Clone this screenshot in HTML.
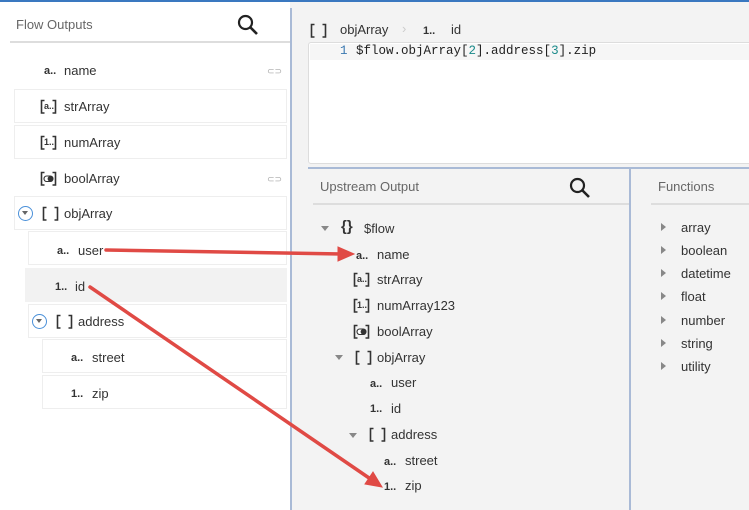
<!DOCTYPE html>
<html><head><meta charset="utf-8"><style>
*{box-sizing:border-box;margin:0;padding:0}
body{width:749px;height:510px;overflow:hidden;background:#fff;font-family:"Liberation Sans",sans-serif;color:#333;position:relative;font-size:13px}
.a{position:absolute}
.row{position:absolute;border:1px solid #eee;background:#fff;height:34px}
.t{position:absolute;font-size:13px;color:#333}
.ic{position:absolute;font-size:11px;font-weight:bold;color:#333}
.bx{position:absolute;width:17px;height:17px}
.bx svg{position:absolute;left:0;top:0}
.bx span{position:absolute;left:4px;top:3px;font-size:9px;font-weight:bold;color:#333}
.tri{position:absolute;width:0;height:0;border-left:4px solid transparent;border-right:4px solid transparent;border-top:5px solid #888}
.rt{position:absolute;width:0;height:0;border-top:4px solid transparent;border-bottom:4px solid transparent;border-left:5px solid #888}
.circ{position:absolute;width:15px;height:15px;border:1.5px solid #4a90d9;border-radius:50%}
.circ:after{content:"";position:absolute;left:3px;top:4px;border-left:3.5px solid transparent;border-right:3.5px solid transparent;border-top:4px solid #666}
.mono{font-family:"Liberation Mono",monospace;font-size:12.5px}
</style></head><body>
<svg width="0" height="0" style="position:absolute"><defs>
<symbol id="br" viewBox="0 0 17 17"><path d="M4.5 2.5H1.5V15H4.5M12.5 2.5H15.5V15H12.5" fill="none" stroke="#333" stroke-width="1.6"/></symbol>
<symbol id="tg" viewBox="0 0 17 17"><path d="M4.5 2.5H1.5V15H4.5M12.5 2.5H15.5V15H12.5" fill="none" stroke="#333" stroke-width="1.6"/><rect x="4" y="6" width="9" height="5.5" rx="2.7" fill="#fff" stroke="#333" stroke-width="1.1"/><circle cx="10.2" cy="8.75" r="2.6" fill="#333"/></symbol>
</defs></svg>
<div class="a" style="left:0;top:0;width:749px;height:2px;background:#3a78c0"></div>
<div class="t" style="left:16px;top:17px;color:#666">Flow Outputs</div>
<svg class="a" style="left:237px;top:14px" width="22" height="22" viewBox="0 0 22 22"><circle cx="8.5" cy="8.5" r="6.5" fill="none" stroke="#222" stroke-width="2.2"/><path d="M13 13L20 20" stroke="#222" stroke-width="2.6"/></svg>
<div class="a" style="left:10px;top:41px;width:280px;height:2px;background:#ddd"></div>
<div class="ic" style="left:44px;top:65px">a..</div><div class="t" style="left:64px;top:63px">name</div>
<div class="a" style="left:267px;top:66px;color:#aaa;font-size:9px">⊂⊃</div>
<div class="row" style="left:14px;top:89px;width:273px"></div>
<div class="bx" style="left:40px;top:98px"><svg width="17" height="17"><use href="#br"/></svg><span>a..</span></div><div class="t" style="left:64px;top:99px">strArray</div>
<div class="row" style="left:14px;top:125px;width:273px"></div>
<div class="bx" style="left:40px;top:134px"><svg width="17" height="17"><use href="#br"/></svg><span>1..</span></div><div class="t" style="left:64px;top:135px">numArray</div>
<div class="bx" style="left:40px;top:170px"><svg width="17" height="17"><use href="#tg"/></svg></div><div class="t" style="left:64px;top:171px">boolArray</div>
<div class="a" style="left:267px;top:174px;color:#aaa;font-size:9px">⊂⊃</div>
<div class="row" style="left:14px;top:196px;width:273px"></div>
<div class="circ" style="left:18px;top:206px"></div>
<div class="bx" style="left:42px;top:205px"><svg width="17" height="17"><use href="#br"/></svg></div><div class="t" style="left:64px;top:206px">objArray</div>
<div class="row" style="left:28px;top:231px;width:259px"></div>
<div class="ic" style="left:57px;top:245px">a..</div><div class="t" style="left:78px;top:243px">user</div>
<div class="a" style="left:25px;top:268px;width:262px;height:34px;background:#f2f2f2"></div>
<div class="ic" style="left:55px;top:281px">1..</div><div class="t" style="left:75px;top:279px">id</div>
<div class="row" style="left:28px;top:304px;width:259px"></div>
<div class="circ" style="left:32px;top:314px"></div>
<div class="bx" style="left:56px;top:313px"><svg width="17" height="17"><use href="#br"/></svg></div><div class="t" style="left:78px;top:314px">address</div>
<div class="row" style="left:42px;top:339px;width:245px"></div>
<div class="ic" style="left:71px;top:352px">a..</div><div class="t" style="left:92px;top:350px">street</div>
<div class="row" style="left:42px;top:375px;width:245px"></div>
<div class="ic" style="left:71px;top:388px">1..</div><div class="t" style="left:92px;top:386px">zip</div>
<div class="a" style="left:290px;top:2px;width:459px;height:508px;background:#f3f3f3"></div>
<div class="a" style="left:290px;top:8px;width:2px;height:502px;background:#a9bad6"></div>
<div class="bx" style="left:310px;top:22px"><svg width="17" height="17"><use href="#br"/></svg></div>
<div class="t" style="left:340px;top:22px">objArray</div>
<div class="t" style="left:402px;top:21px;color:#ccc">›</div>
<div class="ic" style="left:423px;top:25px">1..</div><div class="t" style="left:451px;top:22px">id</div>
<div class="a" style="left:308px;top:42px;width:445px;height:122px;background:#fff;border:1px solid #ddd;border-radius:3px"></div>
<div class="a" style="left:310px;top:44px;width:439px;height:16px;background:#f6f6f6"></div>
<div class="a mono" style="left:340px;top:44px;color:#3a78b0">1</div>
<div class="a mono" style="left:356px;top:44px;color:#222">$flow.objArray[<span style="color:#1a8a8a">2</span>].address[<span style="color:#1a8a8a">3</span>].zip</div>
<div class="a" style="left:308px;top:167px;width:441px;height:2px;background:#a9bad6"></div>
<div class="a" style="left:629px;top:169px;width:2px;height:341px;background:#a9bad6"></div>
<div class="t" style="left:320px;top:179px;color:#666">Upstream Output</div>
<svg class="a" style="left:569px;top:177px" width="22" height="22" viewBox="0 0 22 22"><circle cx="8.5" cy="8.5" r="6.5" fill="none" stroke="#222" stroke-width="2.2"/><path d="M13 13L20 20" stroke="#222" stroke-width="2.6"/></svg>
<div class="a" style="left:313px;top:203px;width:316px;height:2px;background:#ddd"></div>
<div class="t" style="left:658px;top:179px;color:#666">Functions</div>
<div class="a" style="left:651px;top:203px;width:98px;height:2px;background:#ddd"></div>
<div class="tri" style="left:321px;top:226px"></div>
<div class="a" style="left:341px;top:218px;font-weight:bold;font-size:15px">{}</div><div class="t" style="left:364px;top:221px">$flow</div>
<div class="ic" style="left:356px;top:250px">a..</div><div class="t" style="left:377px;top:247px">name</div>
<div class="bx" style="left:353px;top:271px"><svg width="17" height="17"><use href="#br"/></svg><span>a..</span></div><div class="t" style="left:377px;top:272px">strArray</div>
<div class="bx" style="left:353px;top:297px"><svg width="17" height="17"><use href="#br"/></svg><span>1..</span></div><div class="t" style="left:377px;top:298px">numArray123</div>
<div class="bx" style="left:353px;top:323px"><svg width="17" height="17"><use href="#tg"/></svg></div><div class="t" style="left:377px;top:324px">boolArray</div>
<div class="tri" style="left:335px;top:355px"></div>
<div class="bx" style="left:355px;top:349px"><svg width="17" height="17"><use href="#br"/></svg></div><div class="t" style="left:377px;top:350px">objArray</div>
<div class="ic" style="left:370px;top:378px">a..</div><div class="t" style="left:391px;top:375px">user</div>
<div class="ic" style="left:370px;top:403px">1..</div><div class="t" style="left:391px;top:401px">id</div>
<div class="tri" style="left:349px;top:433px"></div>
<div class="bx" style="left:369px;top:426px"><svg width="17" height="17"><use href="#br"/></svg></div><div class="t" style="left:391px;top:427px">address</div>
<div class="ic" style="left:384px;top:456px">a..</div><div class="t" style="left:405px;top:453px">street</div>
<div class="ic" style="left:384px;top:481px">1..</div><div class="t" style="left:405px;top:478px">zip</div>
<div class="rt" style="left:661px;top:223px"></div><div class="t" style="left:681px;top:220px">array</div>
<div class="rt" style="left:661px;top:246px"></div><div class="t" style="left:681px;top:243px">boolean</div>
<div class="rt" style="left:661px;top:269px"></div><div class="t" style="left:681px;top:266px">datetime</div>
<div class="rt" style="left:661px;top:292px"></div><div class="t" style="left:681px;top:289px">float</div>
<div class="rt" style="left:661px;top:316px"></div><div class="t" style="left:681px;top:313px">number</div>
<div class="rt" style="left:661px;top:339px"></div><div class="t" style="left:681px;top:336px">string</div>
<div class="rt" style="left:661px;top:362px"></div><div class="t" style="left:681px;top:359px">utility</div>
<svg class="a" style="left:0;top:0" width="749" height="510">
<g stroke="#e04a45" stroke-width="3.5" stroke-linecap="round" fill="#e04a45">
<path d="M106 250L342 254"/><path d="M354 254L338 247L338 261Z" stroke-width="1"/>
<path d="M90 287L372 480"/><path d="M382 487L365 484L373 472Z" stroke-width="1"/>
</g></svg>
</body></html>
